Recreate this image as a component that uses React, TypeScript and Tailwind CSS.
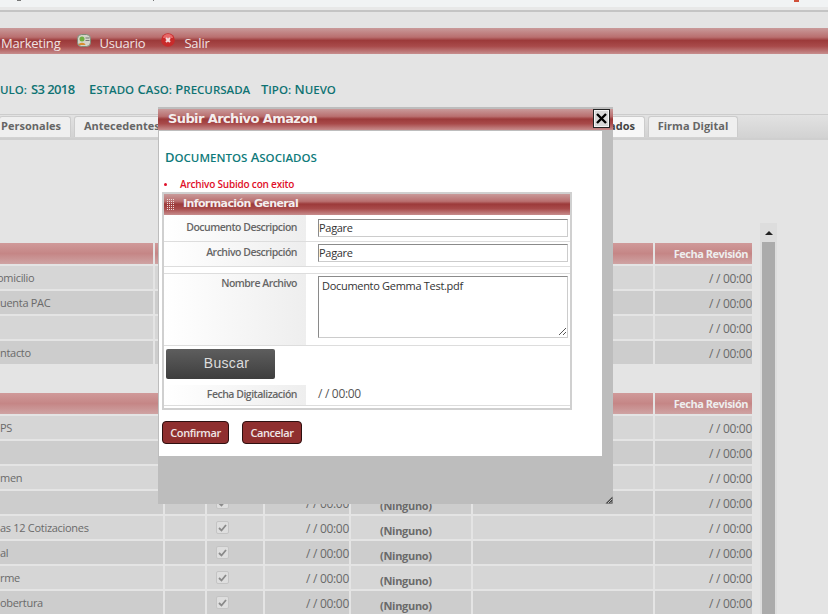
const maroon = "bg-[linear-gradient(to_bottom,#c99a9a_0%,#b96f6f_35%,#9c3a3a_48%,#a84a4a_70%,#c78d8d_100%)]";
const headerBg = "bg-[linear-gradient(to_bottom,#d09a9a,#c58686_50%,#cfa3a3)]";
const columns = "grid grid-cols-[163px_40px_56px_84px_120px_180px_97px] gap-x-[2px]";
const topColumns = "grid grid-cols-[153px_498px_97px] gap-x-[2px]";
const labelGradient = "w-[142px] bg-[linear-gradient(to_right,#ffffff,#eeeeee)] text-right pr-[9px] text-[10.5px] font-semibold text-[#666666] tracking-[-0.5px]";

// Caps stay big, lowercase turns into smaller capitals
function SmallCaps({ text }: { text: string }) {
  const parts = text.split(/([a-zñ:]+)/).filter(Boolean);
  return (
    <>
      {parts.map((part, i) =>
        /^[a-zñ:]+$/.test(part) ? (
          <span key={i} className="text-[11.5px] uppercase">
            {part}
          </span>
        ) : (
          <span key={i}>{part}</span>
        ),
      )}
    </>
  );
}

function FechaHeader() {
  return (
    <div className={`${headerBg} text-right pr-[4px] text-[11px] font-bold leading-[21px] text-[#eeeeee] tracking-[-0.5px]`}>
      Fecha Revisión
    </div>
  );
}

function TableHeader({ grid, cells }: { grid: string; cells: number }) {
  return (
    <div className={`${grid} h-[21px]`}>
      {Array.from({ length: cells }).map((_, i) => (
        <div key={i} className={headerBg} />
      ))}
      <FechaHeader />
    </div>
  );
}

function TopRow({ label, odd, indent }: { label: string; odd: boolean; indent?: string }) {
  const cell = `${odd ? "bg-[#d6d6d6]" : "bg-[#cdcdcd]"} h-[23px] pt-[2px] flex items-center overflow-hidden`;
  return (
    <div className={`${topColumns} h-[23px] mb-[2px] text-[11px] tracking-[-0.3px] text-[#6a6a6a]`}>
      <div className={cell}>
        <span className={indent}>{label}</span>
      </div>
      <div className={cell} />
      <div className={`${cell} justify-end text-[12px]`}>/ / 00:00</div>
    </div>
  );
}

function Row({ label, odd, extra }: { label: string; odd: boolean; extra?: boolean }) {
  const cell = `${odd ? "bg-[#d6d6d6]" : "bg-[#cdcdcd]"} h-[23px] flex items-center`;
  return (
    <div className={`${columns} h-[23px] mb-[2px] text-[11px] tracking-[-0.3px] text-[#6a6a6a]`}>
      <div className={`${cell} pt-[2px]`}>{label}</div>
      <div className={cell} />
      <div className={`${cell} pl-[9px]`}>
        {extra && (
          <span className="w-[13px] h-[13px] rounded-[2px] border border-[#c4c4c4] bg-[#dedede] flex items-center justify-center">
            <svg width="9" height="8" viewBox="0 0 9 8">
              <path d="M1 4l2.5 2.5L8 1" fill="none" stroke="#8a8a8a" strokeWidth="1.8" />
            </svg>
          </span>
        )}
      </div>
      <div className={`${cell} pt-[2px] justify-end text-[12px]`}>{extra && "/ / 00:00"}</div>
      <div className={`${cell} pl-[29px] pt-[8px] font-bold`}>{extra && "(Ninguno)"}</div>
      <div className={cell} />
      <div className={`${cell} pt-[2px] justify-end text-[12px]`}>/ / 00:00</div>
    </div>
  );
}

function ModalField({ label, value, first }: { label: string; value: string; first?: boolean }) {
  return (
    <div className={`flex border-b border-[#dddddd] ${first ? "h-[27px]" : "h-[25px]"}`}>
      <div className={`${labelGradient} ${first ? "pt-[5px]" : "pt-[3px]"}`}>{label}</div>
      <div className={`flex-1 pl-[12px] pr-[2px] ${first ? "pt-[4px]" : "pt-[2px]"}`}>
        <div className="h-[18px] border border-[#8a8a8a] border-r-[#cccccc] border-b-[#cccccc] text-[11px] tracking-[-0.3px] leading-[16px] text-[#333333]">
          {value}
        </div>
      </div>
    </div>
  );
}

function Tab({ children, className }: { children: React.ReactNode; className: string }) {
  return <div className={`h-[21px] border border-b-0 border-[#cccccc] rounded-t-[3px] leading-[18px] ${className}`}>{children}</div>;
}

export default function App() {
  return (
    <div className="relative w-[828px] h-[614px] overflow-hidden bg-[#e4e4e4] font-['Open_Sans',sans-serif]">
      {/* Browser strip */}
      <div className="h-[7px] bg-[#f1f3f4] flex items-start">
        <span className="ml-[17px] w-[4px] h-[1px] bg-[#777777]" />
        <span className="ml-[132px] w-[1px] h-[1px] bg-[#777777]" />
        <span className="ml-[640px] w-[5px] h-[2px] bg-[#d0503a]" />
      </div>
      <div className="h-[5px] bg-[#e8e8e8] border-b-2 border-[#c4c4c4]" />

      {/* Menu bar */}
      <div className={`mt-[16px] h-[26px] ${maroon} flex items-center text-[13px] tracking-[-0.2px] text-[#f0e4e4]`}>
        <span className="ml-[1px] pt-[5px]">Marketing</span>
        <svg className="ml-[16px] mb-[2px]" width="14" height="13" viewBox="0 0 14 13">
          <rect x="0.5" y="0.5" width="13" height="12" rx="4" fill="#d4d4c8" stroke="#7f8a78" />
          <circle cx="5" cy="5" r="2.5" fill="#6fae3f" />
          <path d="M1.5 11c.5-3 6.5-3 7 0z" fill="#d98c2e" />
          <path d="M8.5 4h4M8.5 6.5h4" stroke="#777777" />
        </svg>
        <span className="ml-[9px] pt-[5px]">Usuario</span>
        <svg className="ml-[16px] mb-[2px]" width="14" height="14" viewBox="0 0 14 14">
          <circle cx="7" cy="7" r="6.8" fill="#c92a2a" />
          <path d="M2 5a5 4 0 0 1 10 0z" fill="#e86a6a" />
          <path d="M5 5l4 4M9 5l-4 4" stroke="#f6dcdc" strokeWidth="2" />
        </svg>
        <span className="ml-[9px] pt-[5px]">Salir</span>
      </div>

      {/* Case info */}
      <div className="mt-[26px] h-[18px] flex text-[13px] leading-[18px] font-semibold text-[#0f7373]">
        <span className="w-[89px]">
          <span className="text-[11.5px] uppercase">ulo:</span>
          <span className="ml-[4px] tracking-[-0.6px]">S3 2018</span>
        </span>
        <span className="w-[172px]">
          <SmallCaps text="Estado Caso: Precursada" />
        </span>
        <span>
          <SmallCaps text="Tipo: Nuevo" />
        </span>
      </div>

      {/* Tabs */}
      <div className="mt-[16px] h-[26px] border-b-2 border-[#cfcfcf] bg-[linear-gradient(to_bottom,#e2e2e2,#d2d2d2)] border-t border-t-[#cccccc] pt-[1px] flex text-[11px] font-bold text-[#666666]">
        <Tab className="w-[72px] ml-[-1px] bg-[#efefef] text-right pr-[9px]">Personales</Tab>
        <Tab className="w-[100px] ml-[3px] bg-[#efefef] pl-[9px]">Antecedentes</Tab>
        <Tab className="w-[60px] ml-[411px] bg-[#f7f7f7] text-right pr-[9px] text-[#444444]">ados</Tab>
        <Tab className="w-[90px] ml-[3px] bg-[#efefef] text-center">Firma Digital</Tab>
      </div>

      {/* Tables and scrollbar */}
      <div className="flex">
        <div className="w-[752px] pt-[103px]">
          <TableHeader grid={topColumns} cells={2} />
          <div className="h-[2px]" />
          <TopRow label="omicilio" odd indent="ml-[-3px]" />
          <TopRow label="uenta PAC" odd={false} />
          <TopRow label="" odd />
          <TopRow label="ntacto" odd={false} />
          <div className="h-[27px]" />
          <TableHeader grid={columns} cells={6} />
          <div className="h-[2px]" />
          <Row label="PS" odd />
          <Row label="" odd={false} />
          <Row label="men" odd />
          <Row label="" odd={false} extra />
          <Row label="as 12 Cotizaciones" odd extra />
          <Row label="al" odd={false} extra />
          <Row label="rme" odd extra />
          <Row label="obertura" odd={false} extra />
        </div>
        <div className="ml-[8px] mt-[83px] w-[17px] h-[400px] bg-[#dddddd]">
          <div className="h-[19px] flex items-center justify-center">
            <div className="w-0 h-0 border-x-[4px] border-x-transparent border-b-[4px] border-b-[#222222]" />
          </div>
          <div className="mx-[2px] h-[380px] bg-[#ababab]" />
        </div>
      </div>

      {/* Modal */}
      <div className="absolute left-[158px] top-[107px] w-[455px] h-[397px] bg-[#bdbdbd]">
        <div className="h-[2px]" />
        <div className={`h-[21px] ${maroon} pl-[10px] text-[13px] leading-[19px] font-bold text-[#f4eeee] font-['DejaVu_Sans',sans-serif] tracking-[-0.6px]`}>
          Subir Archivo Amazon
        </div>
        <div className="absolute left-[435px] top-[2px] w-[17px] h-[19px] bg-[#d8d8d8] border border-[#222222] shadow-[inset_0_0_0_1px_#f4f4f4] flex items-center justify-center">
          <svg width="11" height="11" viewBox="0 0 11 11">
            <path d="M1 1l9 9M10 1l-9 9" stroke="#000000" strokeWidth="2.4" />
          </svg>
        </div>

        <div className="ml-[1px] mt-[1px] w-[443px] h-[325px] bg-white pl-[3px] pt-[18px]">
          <div className="ml-[3px] h-[16px] text-[13px] leading-[16px] font-semibold text-[#0f7b7b]">
            <SmallCaps text="Documentos Asociados" />
          </div>
          <div className="mt-[13px] h-[12px] flex items-center text-[10px] tracking-[-0.2px] font-semibold text-[#e0102a]">
            <span className="ml-[2px] w-[3px] h-[3px] rounded-full bg-[#e0102a]" />
            <span className="ml-[13px]">Archivo Subido con exito</span>
          </div>

          <div className="mt-[2px] w-[410px] border-2 border-[#d0d0d0]">
            <div className={`h-[21px] ${maroon} flex items-center text-[11px] font-bold text-[#f4eeee] font-['DejaVu_Sans',sans-serif] tracking-[-0.6px]`}>
              <svg className="ml-[3px]" width="7" height="11" viewBox="0 0 7 11">
                <defs>
                  <pattern id="dots" width="2" height="2" patternUnits="userSpaceOnUse">
                    <rect width="1" height="1" fill="#ecdada" />
                  </pattern>
                </defs>
                <rect width="7" height="11" fill="url(#dots)" />
              </svg>
              <span className="ml-[9px]">Información General</span>
            </div>
            <ModalField label="Documento Descripcion" value="Pagare" first />
            <ModalField label="Archivo Descripción" value="Pagare" />
            <div className="h-[7px] border-b border-[#dddddd]" />
            <div className="flex h-[72px] border-b border-[#dddddd]">
              <div className={`${labelGradient} pt-[2px]`}>Nombre Archivo</div>
              <div className="relative flex-1 pl-[12px] pr-[2px] pt-[2px]">
                <div className="h-[62px] border border-[#8a8a8a] border-r-[#cccccc] border-b-[#cccccc] pl-[3px] text-[11px] tracking-[-0.3px] leading-[18px] text-[#333333]">
                  Documento Gemma Test.pdf
                </div>
                <svg className="absolute right-[3px] bottom-[9px]" width="9" height="9" viewBox="0 0 9 9">
                  <path d="M8 1L1 8M8 5L5 8" stroke="#555555" />
                </svg>
              </div>
            </div>
            <div className="ml-[2px] mt-[3px] w-[109px] h-[30px] rounded-[2px] bg-[linear-gradient(to_bottom,#5e5e5e,#3e3e3e)] pl-[12px] text-center text-[14px] tracking-[0.3px] leading-[29px] text-[#dddddd] font-['Liberation_Sans',sans-serif]">
              Buscar
            </div>
            <div className="flex h-[21px] mt-[6px] border-b border-[#dddddd]">
              <div className={`${labelGradient} leading-[19px]`}>Fecha Digitalización</div>
              <div className="pl-[12px] text-[12px] tracking-[-0.3px] leading-[18px] text-[#555555]">/ / 00:00</div>
            </div>
            <div className="h-[2px]" />
          </div>

          <div className="mt-[11px] flex text-[11px] tracking-[-0.4px] font-semibold text-[#f0e6e6]">
            <div className="w-[67px] h-[23px] rounded-[4px] bg-[#8f2f2f] border border-[#2e1010] text-center leading-[21px]">
              Confirmar
            </div>
            <div className="ml-[13px] w-[60px] h-[23px] rounded-[4px] bg-[#8f2f2f] border border-[#2e1010] text-center leading-[21px]">
              Cancelar
            </div>
          </div>
        </div>

        {/* Resize grip */}
        <svg className="absolute right-0 bottom-0" width="8" height="8" viewBox="0 0 8 8">
          <path d="M7.5 0.5V7.5H0.5Z" fill="#444444" />
          <path d="M7 3L3 7M7 5.5L5.5 7" stroke="#bdbdbd" />
        </svg>
      </div>
    </div>
  );
}
